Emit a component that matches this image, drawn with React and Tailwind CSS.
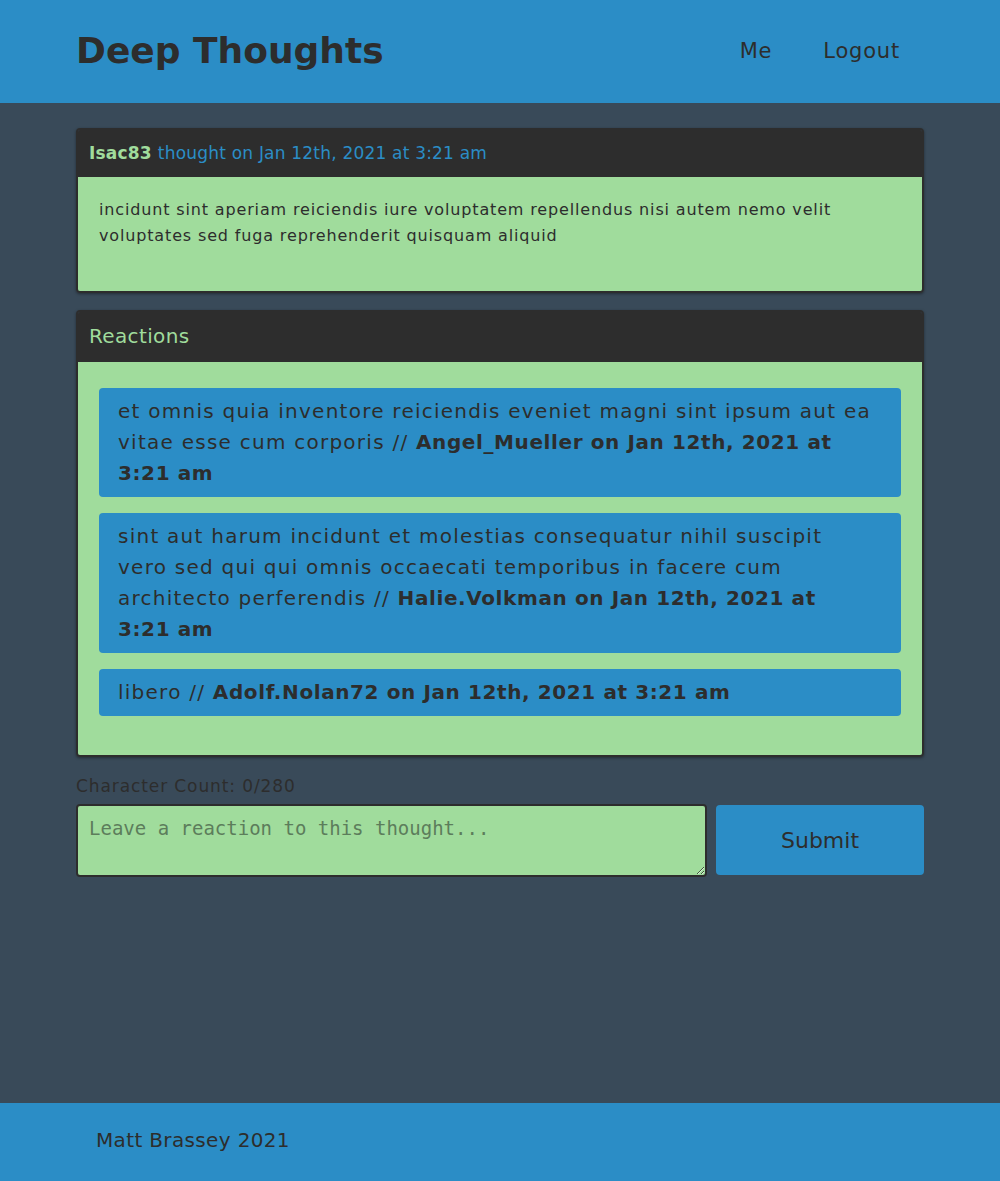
import React, { useState } from 'react';

const reactions = [
  {
    body: 'et omnis quia inventore reiciendis eveniet magni sint ipsum aut ea vitae esse cum corporis',
    user: 'Angel_Mueller',
  },
  {
    body: 'sint aut harum incidunt et molestias consequatur nihil suscipit vero sed qui qui omnis occaecati temporibus in facere cum architecto perferendis',
    user: 'Halie.Volkman',
  },
  { body: 'libero', user: 'Adolf.Nolan72' },
];

export default function App() {
  const [text, setText] = useState('');

  return (
    <div className="min-h-screen flex flex-col bg-[#394a59] text-[#2d2d2d] font-['DejaVu_Sans',sans-serif]">
      {/* Header */}
      <header className="h-[103px] bg-[#2b8dc6] flex items-center justify-between pl-[76px] pr-[100px]">
        <h1 className="text-[36px] font-bold leading-none -mt-[2px]">Deep Thoughts</h1>
        <nav className="flex items-center gap-[51px] text-[21px] tracking-[0.8px]">
          <a href="#">Me</a>
          <a href="#">Logout</a>
        </nav>
      </header>

      <main className="flex-1 px-[76px] pt-[25px]">
        {/* Thought card */}
        <div className="border-2 border-[#2d2d2d] rounded-[4px] overflow-hidden shadow-[0_1px_3px_rgba(0,0,0,0.4)]">
          <div className="bg-[#2d2d2d] h-[47px] flex items-center px-[11px] text-[17px] tracking-[0.2px]">
            <span className="text-[#a0dc9c] font-bold">Isac83</span>
            <span className="text-[#2b8dc6] ml-[6px]">thought on Jan 12th, 2021 at 3:21 am</span>
          </div>
          <div className="bg-[#a0dc9c] px-[21px] pt-[20px] pb-[42px]">
            <p className="text-[16px] leading-[26px] tracking-[0.85px]">
              incidunt sint aperiam reiciendis iure voluptatem repellendus nisi autem nemo velit voluptates sed fuga reprehenderit quisquam aliquid
            </p>
          </div>
        </div>

        {/* Reactions card */}
        <div className="mt-[17px] border-2 border-[#2d2d2d] rounded-[4px] overflow-hidden shadow-[0_1px_3px_rgba(0,0,0,0.4)]">
          <div className="bg-[#2d2d2d] h-[50px] flex items-center px-[11px] pb-[3px] text-[20px] tracking-[0.35px] text-[#a0dc9c]">
            Reactions
          </div>
          <div className="bg-[#a0dc9c] px-[21px] pt-[26px] pb-[39px] flex flex-col gap-[16px]">
            {reactions.map((r) => (
              <div key={r.user} className="bg-[#2b8dc6] rounded-[4px] pl-[19px] pr-[26px] py-[8px] text-[20px] leading-[31px] tracking-[1.25px]">
                {r.body} // <span className="font-bold tracking-[0.6px]">{r.user} on Jan 12th, 2021 at 3:21 am</span>
              </div>
            ))}
          </div>
        </div>

        {/* Reaction form */}
        <p className="mt-[19px] text-[17px] leading-[20px] tracking-[0.9px]">Character Count: {text.length}/280</p>
        <form className="mt-[8px] flex items-start gap-[9px]" onSubmit={(e) => e.preventDefault()}>
          <textarea
            value={text}
            onChange={(e) => setText(e.target.value)}
            placeholder="Leave a reaction to this thought..."
            className="flex-1 h-[73px] bg-[#a0dc9c] border-2 border-[#2d2d2d] rounded-[4px] px-[11px] pt-[10px] text-[19px] leading-[24px] font-['DejaVu_Sans_Mono',monospace] placeholder:text-[#5c7d5b] outline-none"
          />
          <button type="submit" className="w-[208px] h-[70px] mt-[1px] bg-[#2b8dc6] rounded-[4px] text-[22px]">
            Submit
          </button>
        </form>
      </main>

      {/* Footer */}
      <footer className="h-[78px] bg-[#2b8dc6] flex items-center px-[96px] pb-[4px] text-[20px] tracking-[0.35px]">
        Matt Brassey 2021
      </footer>
    </div>
  );
}
